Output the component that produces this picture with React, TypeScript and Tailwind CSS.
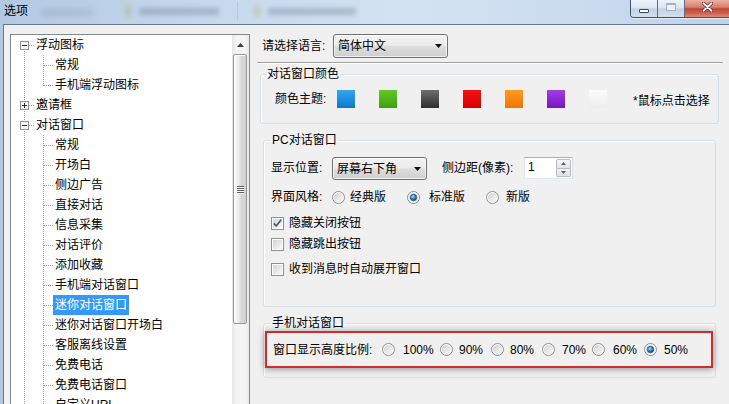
import React from "react";

type TNode = {
  label: string;
  level: 1 | 2;
  box?: "minus" | "plus";
  first?: boolean;
  last?: boolean;
  selected?: boolean;
};

const TREE: TNode[] = [
  { label: "浮动图标", level: 1, box: "minus", first: true },
  { label: "常规", level: 2 },
  { label: "手机端浮动图标", level: 2, last: true },
  { label: "邀请框", level: 1, box: "plus" },
  { label: "对话窗口", level: 1, box: "minus" },
  { label: "常规", level: 2 },
  { label: "开场白", level: 2 },
  { label: "侧边广告", level: 2 },
  { label: "直接对话", level: 2 },
  { label: "信息采集", level: 2 },
  { label: "对话评价", level: 2 },
  { label: "添加收藏", level: 2 },
  { label: "手机端对话窗口", level: 2 },
  { label: "迷你对话窗口", level: 2, selected: true },
  { label: "迷你对话窗口开场白", level: 2 },
  { label: "客服离线设置", level: 2 },
  { label: "免费电话", level: 2 },
  { label: "免费电话窗口", level: 2 },
  { label: "自定义URL", level: 2 },
];

const dot = {
  stroke: "#a0a0a0",
  strokeWidth: 1,
  strokeDasharray: "1 1",
  shapeRendering: "crispEdges" as const,
};

function Connector({ node }: { node: TNode }) {
  if (node.level === 1) {
    return (
      <svg width="23" height="20" className="shrink-0">
        {!node.first && <line x1="13.5" y1="0" x2="13.5" y2="6" {...dot} />}
        <line x1="13.5" y1="16" x2="13.5" y2="20" {...dot} />
        <line x1="18" y1="10.5" x2="23" y2="10.5" {...dot} />
        <rect x="9.5" y="6.5" width="8" height="8" fill="#f6f6f6" stroke="#919191" shapeRendering="crispEdges" />
        <line x1="11" y1="10.5" x2="16" y2="10.5" stroke="#2a2a2a" shapeRendering="crispEdges" />
        {node.box === "plus" && (
          <line x1="13.5" y1="8" x2="13.5" y2="13" stroke="#2a2a2a" shapeRendering="crispEdges" />
        )}
      </svg>
    );
  }
  return (
    <svg width="42" height="20" className="shrink-0">
      <line x1="13.5" y1="0" x2="13.5" y2="20" {...dot} />
      <line x1="32.5" y1="0" x2="32.5" y2={node.last ? 11 : 20} {...dot} />
      <line x1="33" y1="10.5" x2="42" y2="10.5" {...dot} />
    </svg>
  );
}

function useSafeId() {
  return React.useId().replace(/[^a-zA-Z0-9]/g, "");
}

function Radio({ checked }: { checked?: boolean }) {
  const id = useSafeId();
  return (
    <svg width="13" height="13" viewBox="0 0 13 13" className="shrink-0">
      <defs>
        <linearGradient id={`o${id}`} x1="0" y1="0" x2="1" y2="1">
          <stop offset="0" stopColor="#cfcfcf" />
          <stop offset="1" stopColor="#fbfbfb" />
        </linearGradient>
        <radialGradient id={`c${id}`} cx="0.4" cy="0.35" r="0.7">
          <stop offset="0" stopColor="#b4e3ff" />
          <stop offset="0.45" stopColor="#3a90cf" />
          <stop offset="1" stopColor="#0d3b66" />
        </radialGradient>
      </defs>
      <circle cx="6.5" cy="6.5" r="6" fill="#ffffff" stroke="#8c8c8c" />
      <circle cx="6.5" cy="6.5" r="4.6" fill={`url(#o${id})`} />
      {checked && (
        <circle cx="6.5" cy="6.5" r="3.2" fill={`url(#c${id})`} stroke="#1b4a74" strokeWidth="0.7" />
      )}
    </svg>
  );
}

function Checkbox({ checked }: { checked?: boolean }) {
  const id = useSafeId();
  return (
    <svg width="13" height="13" viewBox="0 0 13 13" className="shrink-0">
      <defs>
        <linearGradient id={`k${id}`} x1="0" y1="0" x2="1" y2="1">
          <stop offset="0" stopColor="#d4d4d4" />
          <stop offset="1" stopColor="#f8f8f8" />
        </linearGradient>
      </defs>
      <rect x="0.5" y="0.5" width="12" height="12" fill="#ffffff" stroke="#8e8f8f" shapeRendering="crispEdges" />
      <rect x="2" y="2" width="9" height="9" fill={`url(#k${id})`} />
      {checked && (
        <path d="M2.8 6.4 L5.2 9 L10.2 2.8" fill="none" stroke="#3d5384" strokeWidth="1.6" strokeLinejoin="round" />
      )}
    </svg>
  );
}

function Arrow() {
  return (
    <svg width="7" height="4" viewBox="0 0 7 4" className="shrink-0">
      <path d="M0 0 H7 L3.5 4 Z" fill="#111" />
    </svg>
  );
}

function TitleBar() {
  return (
    <div className="flex h-[24px] items-start">
      <span className="pl-[4px] pt-[3px] leading-[16px]">选项</span>
      <div className="ml-[13px] mt-[9px] h-[7px] w-[52px] rounded bg-[#5d6d82]/20 blur-[3px]" />
      <div className="ml-[32px] mt-[5px] flex items-center gap-[8px] opacity-30 blur-[2.5px]">
        <span className="h-[12px] w-[6px] bg-[#9aa83a]" />
        <span className="h-[7px] w-[80px] bg-[#4e5e74]" />
      </div>
      <div className="ml-[18px] mt-[2px] h-[18px] w-[1px] bg-[#8fa3bb]/30" />
      <div className="ml-[16px] mt-[5px] flex items-center gap-[8px] opacity-30 blur-[2.5px]">
        <span className="h-[12px] w-[6px] bg-[#b8a03a]" />
        <span className="h-[7px] w-[88px] bg-[#4e5e74]" />
      </div>
      <div className="ml-auto flex h-[18px] overflow-hidden rounded-bl-[4px] border border-t-0 border-r-0 border-[#3f5068] shadow-[0_1px_0_rgba(255,255,255,0.55)]">
        <div className="flex w-[27px] items-end justify-center border-r border-[#5d6f88] bg-[linear-gradient(#eef3fa,#dbe5f1_45%,#c2d2e6_52%,#d3e0ee)] pb-[4px]">
          <span className="h-[4px] w-[10px] rounded-[1px] border border-[#34455c] bg-white" />
        </div>
        <div className="flex w-[27px] items-start justify-center border-r border-[#5d6f88] bg-[linear-gradient(#eef3fa,#dbe5f1_45%,#c2d2e6_52%,#d3e0ee)] pt-[3px]">
          <span className="h-[8px] w-[10px] border border-t-2 border-[#a4b2c4] bg-[#eef2f7]" />
        </div>
        <div className="flex w-[44px] items-start justify-center bg-[linear-gradient(#eab0a3,#d77e6d_42%,#c24633_52%,#cd6454_80%,#dc8e80)] pt-[2px]">
          <svg width="11" height="10" viewBox="0 0 11 10">
            <path d="M1.5 1.2 L9.5 8.8 M9.5 1.2 L1.5 8.8" stroke="#5a1a12" strokeWidth="3.4" strokeLinecap="round" />
            <path d="M1.5 1.2 L9.5 8.8 M9.5 1.2 L1.5 8.8" stroke="#ffffff" strokeWidth="1.9" strokeLinecap="round" />
          </svg>
        </div>
      </div>
    </div>
  );
}

function Tree() {
  return (
    <div className="ml-[6px] mt-[9px] flex h-[400px] w-[240px] shrink-0 border border-[#828790] bg-white">
      <div className="flex flex-1 flex-col overflow-hidden">
        {TREE.map((n, i) => (
          <div key={i} className="flex h-[20px] shrink-0 items-center">
            <Connector node={n} />
            <span
              className={
                n.selected
                  ? "h-[20px] whitespace-nowrap bg-[#3399ff] px-[2px] leading-[20px] text-white"
                  : "h-[20px] whitespace-nowrap px-[2px] leading-[20px]"
              }
            >
              {n.label}
            </span>
          </div>
        ))}
      </div>
      <div className="flex w-[17px] shrink-0 flex-col bg-[linear-gradient(90deg,#e6e6e6,#f4f4f4_25%,#f4f4f4_75%,#e9e9e9)]">
        <div className="flex h-[17px] items-center justify-center pt-[3px]">
          <svg width="7" height="4" viewBox="0 0 7 4">
            <path d="M0 4 H7 L3.5 0 Z" fill="#3d3d3d" />
          </svg>
        </div>
        <div className="ml-[1px] mt-[2px] flex h-[270px] w-[14px] items-center justify-center rounded-[2px] border border-[#959595] bg-[linear-gradient(90deg,#f7f7f7,#ececec_40%,#dadada_55%,#d0d0d0)] shadow-[inset_1px_1px_0_#ffffff]">
          <div className="flex flex-col gap-[1px]">
            <span className="h-[1px] w-[7px] bg-[#5e5e5e] shadow-[0_1px_0_#ffffff]" />
            <span className="h-[1px] w-[7px] bg-[#5e5e5e] shadow-[0_1px_0_#ffffff]" />
            <span className="h-[1px] w-[7px] bg-[#5e5e5e] shadow-[0_1px_0_#ffffff]" />
            <span className="h-[1px] w-[7px] bg-[#5e5e5e] shadow-[0_1px_0_#ffffff]" />
          </div>
        </div>
      </div>
    </div>
  );
}

const SWATCHES = [
  "bg-[linear-gradient(#35a6f0,#0a78cf)]",
  "bg-[linear-gradient(#62c827,#3ca30c)]",
  "bg-[linear-gradient(#6e6e6e,#2f2f2f)]",
  "bg-[linear-gradient(#f01414,#d60000)]",
  "bg-[linear-gradient(#ff9c1f,#f07400)]",
  "bg-[linear-gradient(#a43de2,#7715c2)]",
  "bg-[linear-gradient(#fbfbfb,#ededed)]",
];

function Right() {
  return (
    <div className="flex flex-1 flex-col">
      <div className="mt-[9px] flex h-[24px] items-center pl-[12px]">
        <span className="w-[71px] leading-[16px]">请选择语言:</span>
        <div className="flex h-[24px] w-[115px] items-center justify-between rounded-[3px] border border-[#707070] bg-[linear-gradient(#f3f3f3,#ebebeb_48%,#dddddd_52%,#cfcfcf)] pl-[4px] pr-[5px] shadow-[inset_0_0_0_1px_rgba(255,255,255,0.7)]">
          <span className="leading-[16px]">简体中文</span>
          <Arrow />
        </div>
      </div>

      <div className="ml-[7px] mr-[6px] mt-[4px] h-[2px] border-b border-t border-b-white border-t-[#a0a0a0]" />

      <fieldset className="mx-[10px] mt-[2px] rounded-[3px] border border-[#d5dfe5] pb-[15px] pt-[8px] shadow-[inset_1px_1px_0_#ffffff]">
        <legend className="ml-[5px] px-[1px] leading-[16px]">对话窗口颜色</legend>
        <div className="flex h-[18px] items-center pl-[14px]">
          <span className="w-[62px] leading-[16px]">颜色主题:</span>
          <div className="flex gap-[24px]">
            {SWATCHES.map((c, i) => (
              <span key={i} className={`h-[18px] w-[18px] ${c}`} />
            ))}
          </div>
          <span className="ml-[26px] mt-[4px] leading-[16px]">*鼠标点击选择</span>
        </div>
      </fieldset>

      <fieldset className="mx-[13px] mt-[8px] rounded-[3px] border border-[#d5dfe5] pb-[27px] pt-[8px] shadow-[inset_1px_1px_0_#ffffff]">
        <legend className="ml-[7px] px-[1px] leading-[16px]">PC对话窗口</legend>
        <div className="flex flex-col pl-[7px]">
          <div className="flex h-[24px] items-center">
            <span className="w-[61px] leading-[16px]">显示位置:</span>
            <div className="mt-[1px] flex h-[23px] w-[95px] items-center justify-between rounded-[3px] border border-[#707070] bg-[linear-gradient(#f3f3f3,#ebebeb_48%,#dddddd_52%,#cfcfcf)] pl-[4px] pr-[5px] shadow-[inset_0_0_0_1px_rgba(255,255,255,0.7)]">
              <span className="leading-[16px]">屏幕右下角</span>
              <Arrow />
            </div>
            <span className="ml-[15px] w-[82px] leading-[16px]">侧边距(像素):</span>
            <div className="flex h-[22px] w-[49px] border border-[#abadb3] border-b-[#e3e9ef] border-l-[#e2e3ea] border-r-[#dbdfe6] bg-white">
              <span className="flex-1 pl-[3px] leading-[19px]">1</span>
              <div className="flex w-[16px] flex-col py-[1px] pr-[1px]">
                <div className="flex flex-1 items-center justify-center rounded-t-[2px] border border-[#b8bcc4] bg-[linear-gradient(#f7f7f7,#e4e4e4)]">
                  <svg width="5" height="3" viewBox="0 0 5 3">
                    <path d="M0 3 H5 L2.5 0 Z" fill="#4d6185" />
                  </svg>
                </div>
                <div className="flex flex-1 items-center justify-center rounded-b-[2px] border border-t-0 border-[#b8bcc4] bg-[linear-gradient(#f3f3f3,#e0e0e0)]">
                  <svg width="5" height="3" viewBox="0 0 5 3">
                    <path d="M0 0 H5 L2.5 3 Z" fill="#4d6185" />
                  </svg>
                </div>
              </div>
            </div>
          </div>

          <div className="mt-[7px] flex h-[20px] items-center">
            <span className="w-[61px] leading-[16px]">界面风格:</span>
            <label className="flex w-[75px] items-center gap-[5px]">
              <Radio />
              <span className="leading-[16px]">经典版</span>
            </label>
            <label className="flex w-[79px] items-center gap-[9px]">
              <Radio checked />
              <span className="leading-[16px]">标准版</span>
            </label>
            <label className="flex items-center gap-[7px]">
              <Radio />
              <span className="leading-[16px]">新版</span>
            </label>
          </div>

          <label className="mt-[6px] flex h-[20px] items-center gap-[5px]">
            <Checkbox checked />
            <span className="leading-[16px]">隐藏关闭按钮</span>
          </label>
          <label className="mt-[1px] flex h-[20px] items-center gap-[5px]">
            <Checkbox />
            <span className="leading-[16px]">隐藏跳出按钮</span>
          </label>
          <label className="mt-[5px] flex h-[20px] items-center gap-[5px]">
            <Checkbox />
            <span className="leading-[16px]">收到消息时自动展开窗口</span>
          </label>
        </div>
      </fieldset>

      <fieldset className="mx-[13px] mt-[8px] rounded-[3px] border border-[#d5dfe5] pb-[9px] shadow-[inset_1px_1px_0_#ffffff]">
        <legend className="ml-[7px] px-[1px] leading-[16px]">手机对话窗口</legend>
        <div className="ml-[1px] mr-[2px] flex h-[37px] items-center border-2 border-[#d42a2a] pl-[6px] shadow-[0_1px_7px_rgba(0,0,0,0.4)]">
          <span className="w-[109px] leading-[16px]">窗口显示高度比例:</span>
          <label className="flex w-[58px] items-center gap-[8px]">
            <Radio />
            <span className="leading-[16px]">100%</span>
          </label>
          <label className="flex w-[51px] items-center gap-[6px]">
            <Radio />
            <span className="leading-[16px]">90%</span>
          </label>
          <label className="flex w-[51px] items-center gap-[6px]">
            <Radio />
            <span className="leading-[16px]">80%</span>
          </label>
          <label className="flex w-[50px] items-center gap-[7px]">
            <Radio />
            <span className="leading-[16px]">70%</span>
          </label>
          <label className="flex w-[52px] items-center gap-[8px]">
            <Radio />
            <span className="leading-[16px]">60%</span>
          </label>
          <label className="flex items-center gap-[7px]">
            <Radio checked />
            <span className="leading-[16px]">50%</span>
          </label>
        </div>
      </fieldset>
    </div>
  );
}

export default function App() {
  return (
    <div className="h-[404px] w-[729px] overflow-hidden bg-[linear-gradient(90deg,#b3c9e1_0%,#c3d7ec_25%,#d3e2f2_55%,#cbdcef_80%,#bdd1e7_100%)] font-['Liberation_Sans','Noto_Sans_CJK_SC',sans-serif] text-[12px] text-black">
      <TitleBar />
      <div className="ml-[3px] flex h-[380px] border-l border-t border-[#66778c] bg-[#f0f0f0]">
        <Tree />
        <Right />
      </div>
    </div>
  );
}
